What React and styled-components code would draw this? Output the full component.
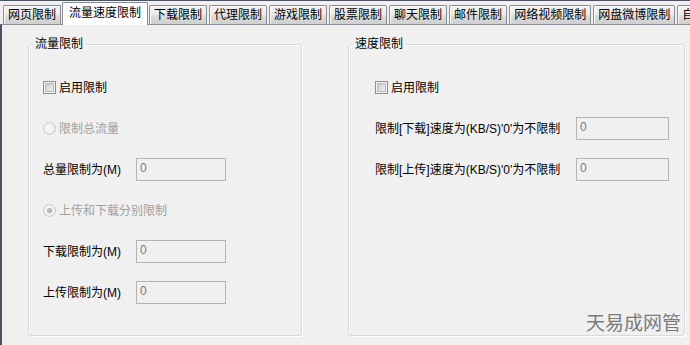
import React from "react";
import styled, { createGlobalStyle } from "styled-components";

const Global = createGlobalStyle`
  html, body { margin: 0; padding: 0; background: #f0f0f0; }
  body {
    width: 690px; height: 345px; overflow: hidden;
    font-family: "Liberation Sans", "Noto Sans CJK SC", "Microsoft YaHei", sans-serif;
    font-size: 12px; color: #000;
  }
`;

const Window = styled.div`
  width: 690px;
  height: 345px;
  box-sizing: border-box;
  border-top: 1px solid #4d535c;
  display: flex;
  flex-direction: column;
  background: #f0f0f0;
  overflow: hidden;
`;

const TabStrip = styled.div`
  height: 23px;
  flex-shrink: 0;
  display: flex;
  align-items: flex-end;
  gap: 2px;
  padding-left: 3px;
  position: relative;
  z-index: 1;
  white-space: nowrap;
`;

const Tab = styled.div`
  flex-shrink: 0;
  box-sizing: border-box;
  height: ${(p) => (p.$active ? "23px" : "19px")};
  margin: ${(p) => (p.$active ? "0 -1px -1px -1px" : "0")};
  padding: ${(p) => (p.$active ? "0 6px 3px" : "0 4px")};
  display: flex;
  align-items: center;
  border: 1px solid #898c95;
  border-bottom: none;
  border-radius: 2px 2px 0 0;
  line-height: 14px;
  background: ${(p) =>
    p.$active
      ? "#ffffff"
      : "linear-gradient(#f3f3f3 0%, #ebebeb 50%, #dedede 50%, #cfcfcf 100%)"};
  box-shadow: ${(p) => (p.$active ? "none" : "inset 1px 1px 0 #fbfbfb")};
`;

const Panel = styled.div`
  flex: 1;
  box-sizing: border-box;
  border-top: 1px solid #8d9096;
  border-left: 2px solid #4c525c;
  padding: 12px 0 0 26px;
  display: grid;
  grid-template-columns: 274px 337px;
  column-gap: 46px;
  align-items: start;
`;

const Group = styled.fieldset`
  margin: 0;
  padding: 0;
  min-width: 0;
  box-sizing: border-box;
  height: 299px;
  border: 1px solid #d5dbe0;
  border-radius: 3px;
  box-shadow: inset 1px 1px 0 #ffffff, 1px 1px 0 #ffffff;
  display: flex;
  flex-direction: column;
`;

const Legend = styled.legend`
  margin-left: 4px;
  padding: 0 2px;
  line-height: 14px;
  font-size: 12px;
`;

const Content = styled.div`
  flex: 1;
  display: flex;
  flex-direction: column;
  gap: 18px;
  padding: 25px 0 0 ${(p) => p.$pad}px;
`;

const Row = styled.div`
  height: 23px;
  display: flex;
  align-items: center;
  gap: 3px;
  color: ${(p) => (p.$disabled ? "#a0a0a0" : "#000")};
  line-height: 14px;
`;

const CheckBox = styled.span`
  position: relative;
  width: 13px;
  height: 13px;
  box-sizing: border-box;
  border: 1px solid #8e8f8f;
  background: #f4f4f4;
  flex-shrink: 0;
  &::after {
    content: "";
    position: absolute;
    left: 1px;
    top: 1px;
    width: 9px;
    height: 9px;
    border: 1px solid #b8bcc2;
    box-sizing: border-box;
    background: linear-gradient(135deg, #c9ccd1 0%, #eeeeef 100%);
  }
`;

const Radio = styled.span`
  position: relative;
  width: 13px;
  height: 13px;
  box-sizing: border-box;
  border-radius: 50%;
  border: 1px solid #cacaca;
  background: radial-gradient(circle at 40% 40%, #fafafa 0%, #e6e6e6 100%);
  flex-shrink: 0;
  &::after {
    content: "";
    display: ${(p) => (p.$checked ? "block" : "none")};
    position: absolute;
    left: 3px;
    top: 3px;
    width: 5px;
    height: 5px;
    border-radius: 50%;
    background: radial-gradient(circle at 40% 40%, #c8c8c8, #9a9a9a);
  }
`;

const FieldLabel = styled.span`
  width: ${(p) => p.$w}px;
  flex-shrink: 0;
  white-space: nowrap;
`;

const Input = styled.div`
  width: ${(p) => p.$w}px;
  height: 23px;
  box-sizing: border-box;
  border: 1px solid #b4b4b4;
  background: #f0f0f0;
  color: #7a7a7a;
  padding: 2px 0 0 3px;
  line-height: 14px;
  margin-left: -3px;
`;

const Watermark = styled.div`
  margin-top: auto;
  align-self: flex-end;
  margin-right: 3px;
  margin-bottom: 3px;
  font-family: "Noto Sans CJK SC", sans-serif;
  font-size: 19px;
  line-height: 20px;
  color: #7b7b7b;
`;

const tabs = [
  "网页限制",
  "流量速度限制",
  "下载限制",
  "代理限制",
  "游戏限制",
  "股票限制",
  "聊天限制",
  "邮件限制",
  "网络视频限制",
  "网盘微博限制",
  "自",
];

export default function App() {
  return (
    <>
      <Global />
      <Window>
        <TabStrip>
          {tabs.map((t, i) => (
            <Tab key={t} $active={i === 1}>
              {t}
            </Tab>
          ))}
        </TabStrip>
        <Panel>
          <Group>
            <Legend>流量限制</Legend>
            <Content $pad={14}>
              <Row>
                <CheckBox />
                <span>启用限制</span>
              </Row>
              <Row $disabled>
                <Radio />
                <span>限制总流量</span>
              </Row>
              <Row>
                <FieldLabel $w={93}>总量限制为(M)</FieldLabel>
                <Input $w={90}>0</Input>
              </Row>
              <Row $disabled>
                <Radio $checked />
                <span>上传和下载分别限制</span>
              </Row>
              <Row>
                <FieldLabel $w={93}>下载限制为(M)</FieldLabel>
                <Input $w={90}>0</Input>
              </Row>
              <Row>
                <FieldLabel $w={93}>上传限制为(M)</FieldLabel>
                <Input $w={90}>0</Input>
              </Row>
            </Content>
          </Group>
          <Group>
            <Legend>速度限制</Legend>
            <Content $pad={26}>
              <Row>
                <CheckBox />
                <span>启用限制</span>
              </Row>
              <Row>
                <FieldLabel $w={201}>限制[下载]速度为(KB/S)'0'为不限制</FieldLabel>
                <Input $w={93}>0</Input>
              </Row>
              <Row>
                <FieldLabel $w={201}>限制[上传]速度为(KB/S)'0'为不限制</FieldLabel>
                <Input $w={93}>0</Input>
              </Row>
              <Watermark>天易成网管</Watermark>
            </Content>
          </Group>
        </Panel>
      </Window>
    </>
  );
}
